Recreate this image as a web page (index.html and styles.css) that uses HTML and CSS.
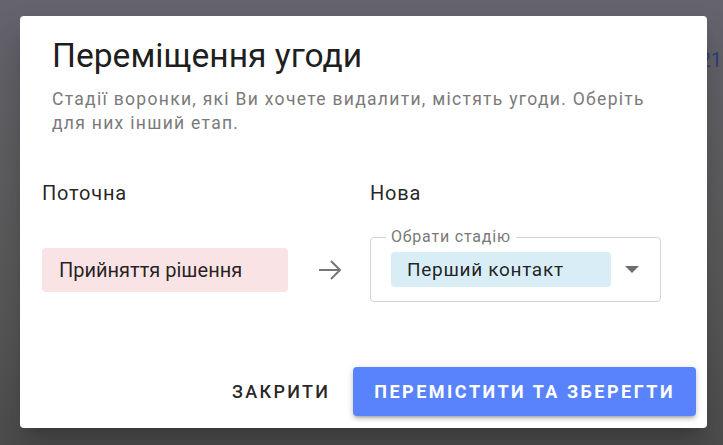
FILE: index.html
```html
<!DOCTYPE html>
<html lang="uk">
  <head>
    <meta charset="UTF-8" />
    <meta name="viewport" content="width=device-width, initial-scale=1.0" />
    <title>Переміщення угоди</title>
    <link rel="stylesheet" href="styles.css">
  </head>
  <body>
    <div class="backdrop">
      <span class="behind-amount">21</span>
      <div class="dialog">
        <h2 class="dialog-title">Переміщення угоди</h2>
        <p class="dialog-text">
          Стадії воронки, які Ви хочете видалити, містять угоди. Оберіть
          для них інший етап.
        </p>

        <div class="stages">
          <div class="stage-label">Поточна</div>
          <div></div>
          <div class="stage-label">Нова</div>

          <div class="stage-chip stage-chip-old">Прийняття рішення</div>
          <div class="arrow">
            <svg width="24" height="24" viewBox="0 0 24 24" fill="none" stroke="#767676" stroke-width="2">
              <path d="M1 12h21M13 3l9 9-9 9" />
            </svg>
          </div>
          <div class="select">
            <span class="select-label">Обрати стадію</span>
            <div class="stage-chip stage-chip-new">Перший контакт</div>
            <svg class="caret" width="14" height="7" viewBox="0 0 14 7">
              <path d="M0 0h14L7 7z" fill="#6f6f6f" />
            </svg>
          </div>
        </div>

        <div class="dialog-actions">
          <button class="btn btn-text">Закрити</button>
          <button class="btn btn-primary">Перемістити та зберегти</button>
        </div>
      </div>
    </div>
  </body>
</html>
```

FILE: styles.css
```css
* {
  box-sizing: border-box;
}
html,
body {
  margin: 0;
  height: 100%;
}
body {
  font-family: Roboto, "Noto Sans", sans-serif;
  background: linear-gradient(#65636d 0, #5f5f62 30%, #575757 70%, #4d4d4d 100%);
}
.backdrop {
  position: relative;
  height: 100%;
  padding: 16px 16px 17px 20px;
  display: flex;
}
.behind-amount {
  position: absolute;
  right: 1px;
  top: 48px;
  font-size: 20px;
  color: #2f3d78;
}
.dialog {
  position: relative;
  flex: 1;
  background: #fff;
  border-radius: 4px;
  box-shadow: 0 11px 15px -7px rgba(0, 0, 0, 0.2), 0 24px 38px 3px rgba(0, 0, 0, 0.14);
  display: flex;
  flex-direction: column;
}
.dialog-title {
  margin: 0;
  padding: 19px 32px 0;
  font-size: 33.6px;
  font-weight: 400;
  line-height: 42px;
  color: rgba(0, 0, 0, 0.9);
}
.dialog-text {
  margin: 10px 0 0;
  padding: 0 32px;
  font-size: 17.5px;
  line-height: 24px;
  letter-spacing: 1.3px;
  color: #7a7a7a;
}
.stages {
  margin-top: 46px;
  padding: 0 22px;
  display: grid;
  grid-template-columns: 246px 82px 291px;
  row-gap: 32px;
  align-items: center;
}
.stage-label {
  font-size: 20px;
  line-height: 24px;
  letter-spacing: 0.8px;
  color: rgba(0, 0, 0, 0.87);
}
.stage-chip {
  border-radius: 4px;
  color: rgba(0, 0, 0, 0.87);
}
.stage-chip-old {
  height: 44px;
  padding: 0 17px;
  display: flex;
  align-items: center;
  background: #fae3e5;
  font-size: 20px;
}
.stage-chip-new {
  width: 220px;
  height: 35px;
  padding: 0 16px;
  display: flex;
  align-items: center;
  background: #d8edf6;
  font-size: 19px;
  letter-spacing: 0.7px;
}
.arrow {
  display: flex;
  justify-content: center;
  padding-left: 2px;
}
.arrow svg {
  display: block;
}
.select {
  position: relative;
  height: 65px;
  border: 1px solid #d5d5d5;
  border-radius: 4px;
  padding: 14px 20px;
  display: flex;
  align-items: center;
  gap: 14px;
}
.select-label {
  position: absolute;
  left: 15px;
  top: -11px;
  padding: 0 5px;
  background: #fff;
  font-size: 16px;
  line-height: 19px;
  letter-spacing: 0.8px;
  color: #7a7a7a;
}
.caret {
  display: block;
}
.dialog-actions {
  margin-top: auto;
  padding: 0 11px 12px;
  display: flex;
  justify-content: flex-end;
  align-items: center;
  gap: 23px;
}
.btn {
  font-family: Roboto, "Noto Sans", sans-serif;
  font-size: 18px;
  font-weight: 500;
  letter-spacing: 2.3px;
  text-transform: uppercase;
  border: none;
  border-radius: 4px;
  cursor: pointer;
}
.btn-text {
  background: none;
  color: rgba(0, 0, 0, 0.87);
  padding: 0;
}
.btn-primary {
  height: 49px;
  padding: 0 21px;
  background: #5883fd;
  color: #fff;
  font-weight: 700;
  letter-spacing: 2.5px;
  box-shadow: 0 3px 3px -2px rgba(0, 0, 0, 0.2), 0 3px 4px 0 rgba(0, 0, 0, 0.14), 0 1px 8px 0 rgba(0, 0, 0, 0.12);
}
```
